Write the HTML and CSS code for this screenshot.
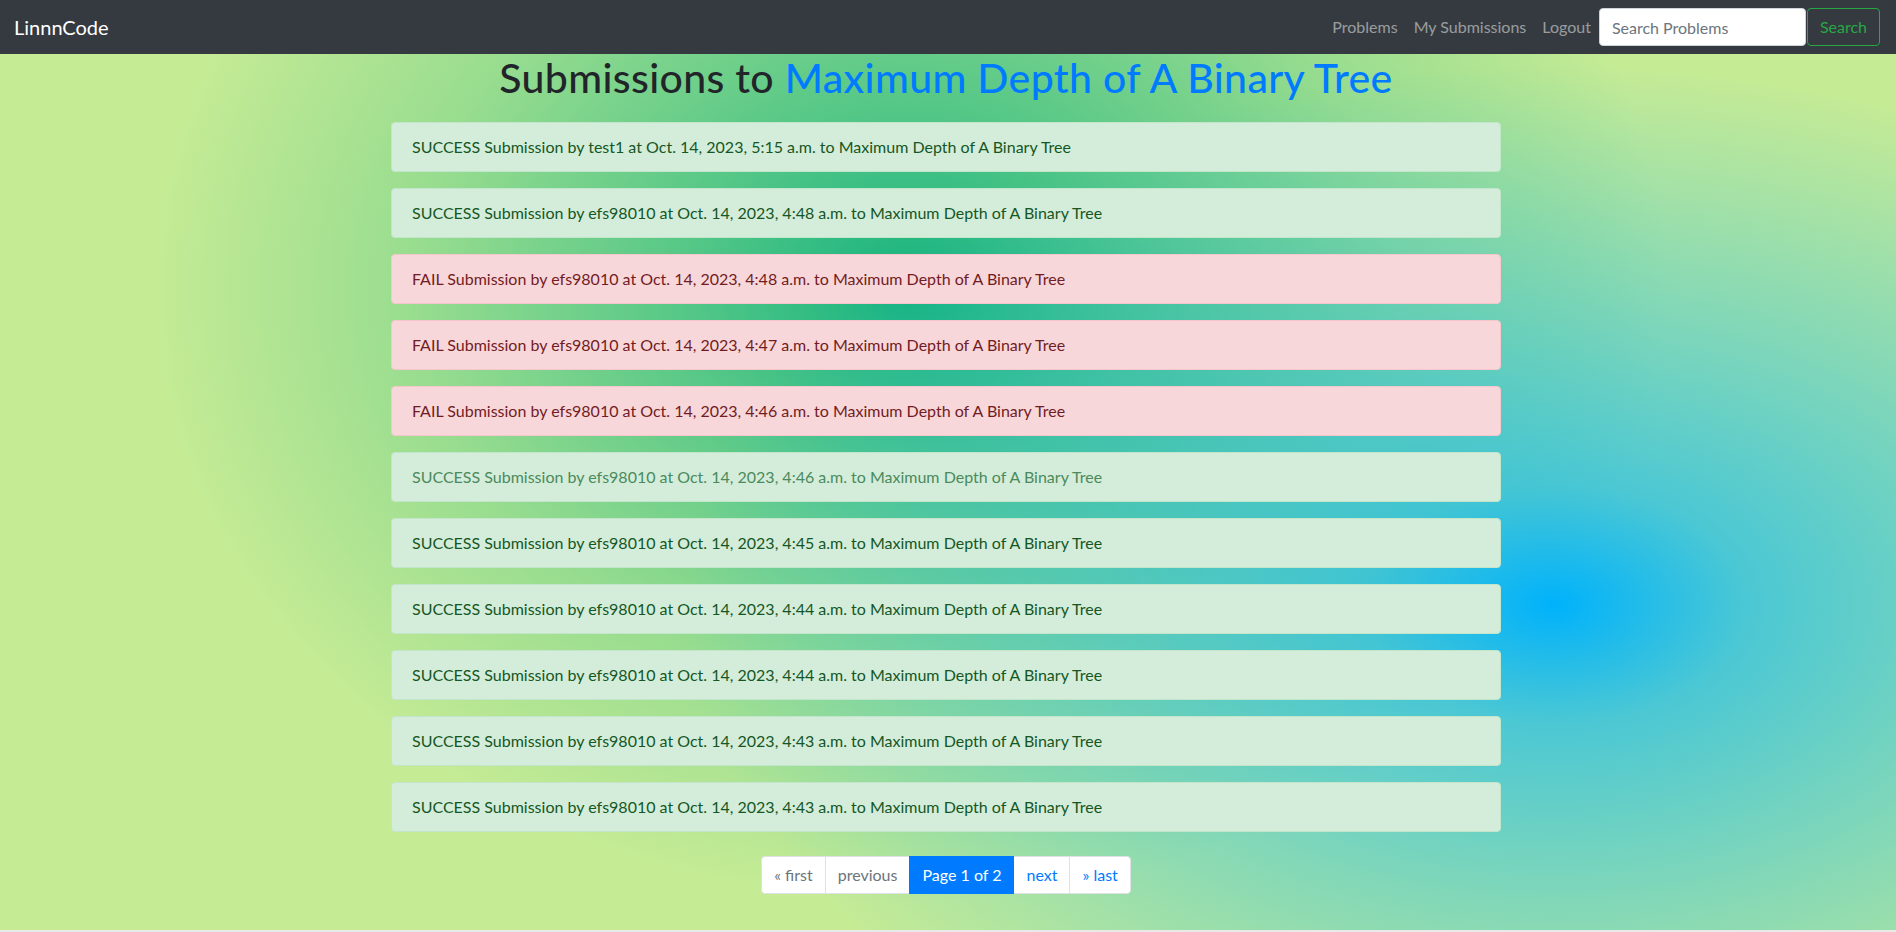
FILE: index.html
```html
<!DOCTYPE html>
<html lang="en">
<head>
<meta charset="utf-8">
<title>Submissions to Maximum Depth of A Binary Tree</title>
<link rel="stylesheet" href="styles.css">
</head>
<body>
<div class="page">
  <nav class="navbar">
    <a class="brand" href="#">LinnnCode</a>
    <div class="nav-right">
      <ul class="nav-links">
        <li><a href="#">Problems</a></li>
        <li><a href="#">My Submissions</a></li>
        <li><a href="#">Logout</a></li>
      </ul>
      <form class="search-form">
        <input class="search-input" type="search" placeholder="Search Problems">
        <button class="search-btn" type="button">Search</button>
      </form>
    </div>
  </nav>

  <main class="container">
    <h1 class="title">Submissions to <span class="title-problem">Maximum Depth of A Binary Tree</span></h1>

    <div class="submissions">
      <div class="alert alert-success">SUCCESS Submission by test1 at Oct. 14, 2023, 5:15 a.m. to Maximum Depth of A Binary Tree</div>
      <div class="alert alert-success">SUCCESS Submission by efs98010 at Oct. 14, 2023, 4:48 a.m. to Maximum Depth of A Binary Tree</div>
      <div class="alert alert-danger">FAIL Submission by efs98010 at Oct. 14, 2023, 4:48 a.m. to Maximum Depth of A Binary Tree</div>
      <div class="alert alert-danger">FAIL Submission by efs98010 at Oct. 14, 2023, 4:47 a.m. to Maximum Depth of A Binary Tree</div>
      <div class="alert alert-danger">FAIL Submission by efs98010 at Oct. 14, 2023, 4:46 a.m. to Maximum Depth of A Binary Tree</div>
      <div class="alert alert-success alert-hover">SUCCESS Submission by efs98010 at Oct. 14, 2023, 4:46 a.m. to Maximum Depth of A Binary Tree</div>
      <div class="alert alert-success">SUCCESS Submission by efs98010 at Oct. 14, 2023, 4:45 a.m. to Maximum Depth of A Binary Tree</div>
      <div class="alert alert-success">SUCCESS Submission by efs98010 at Oct. 14, 2023, 4:44 a.m. to Maximum Depth of A Binary Tree</div>
      <div class="alert alert-success">SUCCESS Submission by efs98010 at Oct. 14, 2023, 4:44 a.m. to Maximum Depth of A Binary Tree</div>
      <div class="alert alert-success">SUCCESS Submission by efs98010 at Oct. 14, 2023, 4:43 a.m. to Maximum Depth of A Binary Tree</div>
      <div class="alert alert-success">SUCCESS Submission by efs98010 at Oct. 14, 2023, 4:43 a.m. to Maximum Depth of A Binary Tree</div>
    </div>

    <ul class="pagination">
      <li class="page-item disabled"><span class="page-link">&laquo; first</span></li>
      <li class="page-item disabled"><span class="page-link">previous</span></li>
      <li class="page-item active"><span class="page-link">Page 1 of 2</span></li>
      <li class="page-item"><a class="page-link" href="#">next</a></li>
      <li class="page-item"><a class="page-link" href="#">&raquo; last</a></li>
    </ul>
  </main>
</div>
</body>
</html>
```

FILE: styles.css
```css
html {
  background: #e9e9e9;
}

body {
  margin: 0;
  font-family: "Segoe UI", Lato, "Noto Sans", "Liberation Sans", sans-serif;
  font-size: 16px;
  line-height: 1.5;
  color: #212529;
}

.page {
  min-height: calc(100vh - 2px);
  background-color: #c5eb95;
  background-image:
    radial-gradient(ellipse 46% 58% at 82% 65%, rgba(0, 178, 251, 1) 0%, rgba(0, 178, 251, 0.62) 22%, rgba(0, 178, 251, 0.32) 58%, rgba(0, 178, 251, 0) 100%),
    radial-gradient(ellipse 40% 66% at 48% 31%, rgba(22, 179, 127, 1) 0%, rgba(22, 179, 127, 0.64) 30%, rgba(22, 179, 127, 0.26) 65%, rgba(22, 179, 127, 0) 100%);
}

/* Navbar */
.navbar {
  display: flex;
  align-items: center;
  justify-content: space-between;
  padding: 8px 16px 8px 14px;
  background: #343a40;
}

.brand {
  color: #fff;
  font-size: 20px;
  line-height: 30px;
  text-decoration: none;
}

.nav-right {
  display: flex;
  align-items: center;
}

.nav-links {
  display: flex;
  list-style: none;
  margin: 0;
  padding: 0;
}

.nav-links a {
  display: block;
  padding: 7px 8px;
  color: rgba(255, 255, 255, 0.5);
  text-decoration: none;
}

.search-form {
  display: flex;
  align-items: center;
  gap: 1px;
}

.search-input {
  width: 207px;
  height: 38px;
  box-sizing: border-box;
  padding: 6px 12px;
  border: 1px solid #ced4da;
  border-radius: 4px;
  background: #fff;
  font: inherit;
  color: #495057;
}

.search-input::placeholder {
  color: #6c757d;
}

.search-btn {
  height: 38px;
  box-sizing: border-box;
  padding: 6px 12px;
  border: 1px solid #28a745;
  border-radius: 4px;
  background: transparent;
  color: #28a745;
  font: inherit;
}

/* Content */
.container {
  width: 1110px;
  margin: 0 auto 0 calc((100% - 1114px) / 2);
}

.title {
  margin: 0 0 20px;
  font-size: 41px;
  font-weight: 500;
  line-height: 48px;
  letter-spacing: 0.35px;
  text-align: center;
  color: #212529;
}

.title-problem {
  color: #007bff;
}

.submissions {
  display: flex;
  flex-direction: column;
  gap: 16px;
}

.alert {
  padding: 12px 20px;
  border: 1px solid transparent;
  border-radius: 4px;
}

.alert-success {
  background: #d4edda;
  border-color: #c3e6cb;
  color: #155724;
}

.alert-danger {
  background: #f8d7da;
  border-color: #f5c6cb;
  color: #721c24;
}

.alert-hover {
  color: #4b8a5c;
}

/* Pagination */
.pagination {
  display: flex;
  justify-content: center;
  list-style: none;
  margin: 24px 0 0;
  padding: 0;
}

.page-link {
  display: block;
  padding: 8px 12px;
  line-height: 20px;
  background: #fff;
  border: 1px solid #dee2e6;
  margin-left: -1px;
  color: #007bff;
  text-decoration: none;
}

.page-item:first-child .page-link {
  margin-left: 0;
  border-radius: 4px 0 0 4px;
}

.page-item:last-child .page-link {
  border-radius: 0 4px 4px 0;
}

.page-item.disabled .page-link {
  color: #6c757d;
}

.page-item.active .page-link {
  background: #007bff;
  border-color: #007bff;
  color: #fff;
  position: relative;
}
```
